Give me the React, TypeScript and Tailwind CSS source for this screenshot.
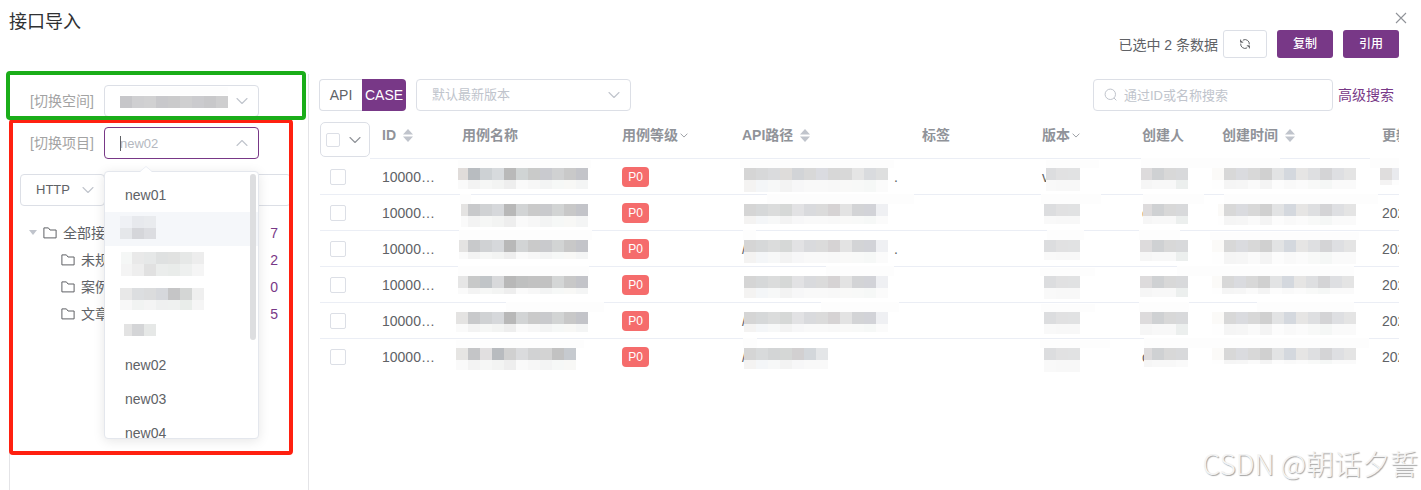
import React from 'react';

type MosaicProps = {
  left: number;
  right: number;
  top: string[];
  bottom: string[];
  bottomHeight?: number;
  y?: number;
  smear?: [number, number];
  smearFull?: boolean;
};

const CELL = 12;

/* Pixelated block that hides a value. Cells sit on a 12px grid that ends at `right`. */
function Mosaic({ left, right, top, bottom, bottomHeight = 9, y = 10, smear, smearFull }: MosaicProps) {
  const cells = (colors: string[], cy: number, h: number) =>
    colors.map((color, i) => {
      const start = Math.max(left, right - (colors.length - i) * CELL);
      const end = right - (colors.length - i - 1) * CELL;
      return <rect key={`${cy}-${i}`} x={start} y={cy} width={Math.max(0, end - start)} height={h} fill={color} />;
    });
  return (
    <svg
      aria-hidden="true"
      className="pointer-events-none absolute -top-px left-0 overflow-visible"
      width={right}
      height={y + CELL + bottomHeight}
      shapeRendering="crispEdges"
    >
      {smear && (
        <rect
          x={smear[0]}
          y={smearFull === false ? 2 : 0}
          width={smear[1] - smear[0]}
          height={smearFull === false ? 8 : 10}
          fill="#fdfdfd"
        />
      )}
      {cells(top, y, CELL)}
      {cells(bottom, y + CELL, bottomHeight)}
    </svg>
  );
}

function Chevron({ up = false, small = false, className = '' }: { up?: boolean; small?: boolean; className?: string }) {
  return (
    <svg
      aria-hidden="true"
      className={`pointer-events-none shrink-0 ${className}`}
      width={small ? 8 : 12}
      height={small ? 5 : 8}
      viewBox="0 0 12 8"
      fill="none"
      stroke="currentColor"
      strokeWidth={small ? 1.4 : 1.1}
      strokeLinecap="round"
      strokeLinejoin="round"
    >
      <path d={up ? 'M1 6.5L6 1.5L11 6.5' : 'M1 1.5L6 6.5L11 1.5'} />
    </svg>
  );
}

function SortCaret() {
  return (
    <svg aria-hidden="true" className="shrink-0" width="10" height="13" viewBox="0 0 10 13" fill="#c0c4cc">
      <path d="M5 0L10 5.5H0Z" />
      <path d="M5 13L0 7.5H10Z" />
    </svg>
  );
}

function Folder() {
  return (
    <svg aria-hidden="true" className="shrink-0" width="14" height="14" viewBox="0 0 14 14" fill="none" stroke="#606266" strokeWidth="1">
      <path d="M0.9 1.9H5.4L7 4H13.1V11.9H0.9Z" strokeLinejoin="round" />
    </svg>
  );
}

const nameTop = ['#e4e3e2', '#c8c9cb', '#d0d2d4', '#d6d8db', '#b8b8b8', '#d2d4d5', '#cacaca', '#c9cacd', '#d2d4d4', '#c8c8c8', '#c3c4c9'];
const nameBottom = ['#fafafa', '#f3f3f3', '#f6f7f6', '#f3f4f3', '#eeeeee', '#fafafa', '#f7f7f7', '#f3f4f4', '#f6f8f7', '#f8f8f6', '#f4f5f5'];
const nameFirst = ['#e0dcda', '#b8bcc0', '#cdd1d4', '#d7dadd', '#b9b9b9', '#d0d4d4', '#c9cac9', '#c9cacf', '#d0d1d2', '#c9c9c9', '#c3c4c9'];
const nameFourth = ['#e6e6e6', '#c8c9c9', '#c1c5c8', '#d8d9db', '#b8b8b8', '#bfc0c0', '#c2c2c2', '#c2c2c2', '#d4d6d6', '#c8c8c8', '#c3c4c9'];
const nameLast = ['#e6e5e3', '#c4c5c7', '#e1dfe0', '#b8bbbf', '#d0d0d0', '#dadbdd', '#d1d2d3', '#d3d3d3', '#c2c2c2', '#c6cacf'];

const pathFirst = ['#d5d5d5', '#d7d8d9', '#dadbdd', '#dedcda', '#d2d4d7', '#d8d8d8', '#dadbe0', '#d7d7d7', '#d8d8d8', '#e5e5e5', '#d9dbde', '#dedfdf'];
const pathTop = ['#d5d5d5', '#d6d8d9', '#dbdcdc', '#d6d8d7', '#e2e2e4', '#d9dadd', '#dbdbdb', '#d6d3d4', '#e3e3e3', '#d3d4d6', '#d2d3d8', '#eff0f3'];
const pathBottom = ['#f4f3f2', '#f4f6f8', '#f7f8f8', '#f3f3f3', '#f7f7f8', '#f9f9f9', '#f9f9f9', '#f8f8f8', '#f9f9f8', '#f8f9f8', '#f6f8f7', '#fbfbfb'];
const pathLast = ['#d5d5d5', '#d8dadb', '#d3d5d6', '#d5d7d6', '#d2d0d1', '#d3d7db', '#e4e6e8'];

const versionTop = ['#dcdddf', '#e1e1e2', '#e1e2e3'];
const versionBottom = ['#f9f9f9', '#f8f8f8', '#f8f8f8'];
const creatorTop = ['#dddbdc', '#cfd1d3', '#d8d8d8', '#d8d9db'];
const creatorBottom = ['#f6f6f6', '#f8f8f8', '#f8f8f8', '#ecefee'];
const createdTop = ['#fbfaf8', '#d8d8d8', '#dadbdf', '#d8d8d8', '#d0d0d0', '#e2e3e4', '#d4d8de', '#e6e5e4', '#dedfe1', '#d4d4d6', '#dedfe2', '#e4e4e4'];
const createdBottom = ['#fefefe', '#f5f5f5', '#f6f6f6', '#fafafa', '#f4f4f4', '#fcfcfc', '#f9f9f9', '#fbfbfb', '#f8f9f8', '#f5f7f6', '#fafafa', '#fafafa'];

type Row = {
  name: MosaicProps;
  path: MosaicProps;
  tail?: string;
  version: MosaicProps;
  versionText?: string;
  creator: MosaicProps;
  creatorText?: string;
  created: MosaicProps;
  pathText?: string;
};

const rows: Row[] = [
  {
    name: { left: 8, right: 138, top: nameFirst, bottom: nameBottom, smear: [8, 141], smearFull: false },
    path: { left: 14, right: 158, top: pathFirst, bottom: pathBottom, bottomHeight: 12, smear: [10, 164], smearFull: false },
    tail: '.',
    version: { left: 16, right: 50, top: versionTop, bottom: versionBottom, bottomHeight: 11, smear: [16, 69], smearFull: false },
    versionText: 'v',
    creator: { left: 11, right: 58, top: creatorTop, bottom: creatorBottom, smear: [11, 80] },
    created: { left: 2, right: 146, top: createdTop, bottom: createdBottom, smear: [0, 70] },
  },
  {
    name: { left: 11, right: 138, top: nameTop, bottom: nameBottom, bottomHeight: 11, smear: [10, 21] },
    path: { left: 14, right: 158, top: pathTop, bottom: pathBottom, bottomHeight: 8, smear: [37, 184] },
    version: { left: 14, right: 50, top: versionTop, bottom: versionBottom, bottomHeight: 8, smear: [11, 71] },
    creator: { left: 13, right: 58, top: creatorTop, bottom: creatorBottom, bottomHeight: 8, smear: [13, 74] },
    creatorText: 'c',
    created: { left: 8, right: 146, top: createdTop, bottom: createdBottom, smear: [14, 168] },
  },
  {
    name: { left: 9, right: 138, top: nameTop, bottom: nameBottom, bottomHeight: 7, smear: [9, 142] },
    path: { left: 14, right: 158, top: pathTop, bottom: pathBottom, bottomHeight: 11, smear: [13, 26] },
    pathText: '/',
    tail: '.',
    version: { left: 14, right: 50, top: versionTop, bottom: versionBottom, bottomHeight: 8, smear: [17, 54] },
    creator: { left: 10, right: 58, top: creatorTop, bottom: creatorBottom, smear: [9, 50] },
    created: { left: 2, right: 146, top: createdTop, bottom: createdBottom, bottomHeight: 12, smear: [0, 149], smearFull: false },
  },
  {
    name: { left: 8, right: 138, top: nameFourth, bottom: nameBottom, bottomHeight: 6, smear: [8, 139] },
    path: { left: 14, right: 158, top: pathTop, bottom: pathBottom, bottomHeight: 10, smear: [96, 164] },
    version: { left: 14, right: 50, top: versionTop, bottom: versionBottom, bottomHeight: 11, smear: [10, 65], smearFull: false },
    creator: { left: 10, right: 58, top: creatorTop, bottom: creatorBottom, smear: [47, 80] },
    created: {
      left: 2, right: 144,
      top: createdTop,
      bottom: createdBottom, bottomHeight: 6, smear: [0, 144],
    },
  },
  {
    name: { left: 6, right: 138, top: nameTop, bottom: nameBottom, bottomHeight: 8, smear: [56, 154] },
    path: { left: 14, right: 158, top: pathTop, bottom: pathBottom, bottomHeight: 8, smear: [91, 169] },
    pathText: '/',
    version: { left: 14, right: 50, top: versionTop, bottom: versionBottom, bottomHeight: 10, smear: [11, 65], smearFull: false },
    creator: { left: 10, right: 58, top: creatorTop, bottom: creatorBottom, bottomHeight: 11, smear: [9, 59] },
    created: { left: 2, right: 146, top: createdTop, bottom: createdBottom, bottomHeight: 11, smear: [47, 144] },
  },
  {
    name: { left: 6, right: 126, top: nameLast, bottom: nameBottom.slice(0, 10), bottomHeight: 10, smear: [6, 134], smearFull: false },
    path: { left: 14, right: 98, top: pathLast, bottom: pathBottom.slice(0, 7), smear: [13, 27] },
    pathText: '/',
    version: { left: 14, right: 50, top: versionTop, bottom: versionBottom, bottomHeight: 12, smear: [10, 80], smearFull: false },
    creator: { left: 14, right: 58, top: creatorTop, bottom: ['#f6f6f6', '#f8f8f8', '#f8f8f8', '#fafafa'], bottomHeight: 7, smear: [14, 80] },
    creatorText: 'c',
    created: { left: 2, right: 146, top: createdTop, bottom: createdBottom, bottomHeight: 4, smear: [0, 159] },
  },
];

const tree = [
  { label: '全部接口', count: 7, root: true },
  { label: '未规划接口', count: 2, root: false },
  { label: '案例接口', count: 0, root: false },
  { label: '文章接口', count: 5, root: false },
];

type Option = { label?: string; active?: boolean; mosaic?: MosaicProps };

const options: Option[] = [
  { label: 'new01' },
  {
    active: true,
    mosaic: { left: 15, right: 51, y: 5, top: ['#eff1f5', '#e7e9ed', '#e9ebee'], bottom: ['#e5e7ea', '#d5d6da', '#dcdde1'], bottomHeight: 11 },
  },
  {
    mosaic: {
      left: 16, right: 99, y: 7,
      top: ['#f5f7f6', '#e9e9e9', '#e6e8e8', '#dfe1e1', '#e1e2e1', '#e6e8e7', '#ededed'],
      bottom: ['#f4f4f4', '#eeeeee', '#e1e1e1', '#ebedec', '#e9ecea', '#eef0ef', '#f5f5f5'],
      bottomHeight: 12,
    },
  },
  {
    mosaic: {
      left: 15, right: 99, y: 9,
      top: ['#e8e8e8', '#dcdee0', '#dbdcdd', '#d6d8dc', '#c5c5c6', '#d4d6d5', '#efefef'],
      bottom: ['#f8f8f8', '#f1f3f2', '#f4f4f4', '#eff0f0', '#eff1f0', '#e9edea', '#f5f5f5'],
      bottomHeight: 10,
    },
  },
  { mosaic: { left: 19, right: 51, y: 11, top: ['#e3e3e3', '#d4d5d7', '#e6e8e7'], bottom: [] } },
  { label: 'new02' },
  { label: 'new03' },
  { label: 'new04' },
];

function HeadCell({ children }: { children?: React.ReactNode }) {
  return (
    <th className="border-b border-[#ebeef5] px-3 pt-1 text-left align-top font-bold">
      <div className="flex h-6 items-center whitespace-nowrap">{children}</div>
    </th>
  );
}

function Sidebar() {
  return (
    <aside className="relative ml-[9px] w-[300px] shrink-0 border-x border-[#e4e4e7] pr-[17px] pt-[11px]">
      <div className="flex items-center pl-5">
        <label htmlFor="space" className="w-[74px] whitespace-nowrap text-[#a3a3a3]">[切换空间]</label>
        <div className="relative">
          <select id="space" className="block h-8 w-[155px] appearance-none rounded border border-[#dcdfe6] bg-white px-4 text-[13px] outline-none" />
          <div className="absolute left-px top-px">
            <Mosaic
              left={15}
              right={123}
              y={11}
              top={['#c6c6c9', '#cfcfd1', '#d1d1d2', '#c8c8cb', '#cacacb', '#cfcfd0', '#cbcbce', '#c8c8ca', '#cececf']}
              bottom={[]}
              smear={[15, 123]}
              smearFull={false}
            />
          </div>
          <Chevron className="absolute right-[11px] top-3 text-[#c0c4cc]" />
        </div>
      </div>

      <div className="mt-[10px] flex items-center pl-5">
        <label htmlFor="project" className="w-[74px] whitespace-nowrap text-[#a3a3a3]">[切换项目]</label>
        <div className="relative">
          <input
            id="project"
            type="text"
            placeholder="new02"
            className="block h-8 w-[155px] rounded border border-[#783887] bg-white px-[15px] text-[13px] outline-none placeholder:text-[#b4b8c0]"
          />
          <span aria-hidden="true" className="absolute left-4 top-[9px] h-[15px] w-px bg-[#606266]" />
          <Chevron up className="absolute right-[11px] top-3 text-[#c0c4cc]" />

          <div className="absolute left-0 top-[44px] z-20 w-[155px]">
            <svg aria-hidden="true" className="absolute -top-[5px] left-9 z-10" width="12" height="7" viewBox="0 0 12 7">
              <path d="M0 6L6 0.5L12 6V7H0Z" fill="#fff" />
              <path d="M0 5.5L6 0.5L12 5.5" fill="none" stroke="#ebeef5" />
            </svg>
            <div className="relative h-[268px] overflow-hidden rounded border border-[#e4e7ed] bg-white shadow-[0_2px_12px_0_rgba(0,0,0,0.1)]">
              <ul role="listbox" aria-label="项目" className="pt-[6px]">
                {options.map((option, i) => (
                  <li
                    key={i}
                    role="option"
                    aria-selected={Boolean(option.active)}
                    className={`relative h-[34px] px-5 leading-[34px] text-[#606266] ${option.active ? 'bg-[#f5f7fa]' : ''}`}
                  >
                    {option.label}
                    {option.mosaic && <Mosaic {...option.mosaic} />}
                  </li>
                ))}
              </ul>
              <span aria-hidden="true" className="absolute right-[2px] top-[2px] h-[166px] w-[6px] rounded-full bg-[#dddee0]" />
            </div>
          </div>
        </div>
      </div>

      <div className="mt-[15px] flex pl-[10px]">
        <div className="relative">
          <select
            aria-label="协议"
            className="block h-8 w-[85px] appearance-none rounded border border-[#dcdfe6] bg-white px-[15px] text-[13px] text-[#606266] outline-none"
          >
            <option>HTTP</option>
          </select>
          <Chevron className="absolute right-[11px] top-3 text-[#c0c4cc]" />
        </div>
        <input aria-label="搜索模块" type="text" className="-ml-px h-8 min-w-0 flex-1 rounded border border-[#dcdfe6] bg-white px-3 text-[13px] outline-none" />
      </div>

      <ul className="mt-[13px]">
        {tree.map((node) => (
          <li key={node.label} className={`flex h-[27px] items-center pr-[13px] ${node.root ? 'pl-[19px]' : 'pl-[51px]'}`}>
            {node.root && (
              <svg aria-hidden="true" className="mr-[6px] shrink-0" width="8" height="5" viewBox="0 0 8 5" fill="#c0c4cc">
                <path d="M0 0H8L4 5Z" />
              </svg>
            )}
            <Folder />
            <span className="ml-[6px] whitespace-nowrap text-[#606266]">{node.label}</span>
            <span className="ml-auto text-[#783887]">{node.count}</span>
          </li>
        ))}
      </ul>

      <div aria-hidden="true" className="pointer-events-none absolute -left-px top-[45px] z-10 h-[336px] w-[284px] rounded border-4 border-[#ff2010]" />
      <div aria-hidden="true" className="pointer-events-none absolute -left-1 -top-[3px] z-10 h-[49px] w-[300px] rounded border-4 border-[#1aad19]" />
    </aside>
  );
}

function CaseTable() {
  return (
    <div className="mt-2 overflow-hidden pl-px">
      <table className="w-[1210px] table-fixed border-separate border-spacing-0 text-[#606266]">
        <colgroup>
          <col className="w-[50px]" />
          <col className="w-[80px]" />
          <col className="w-[160px]" />
          <col className="w-[120px]" />
          <col className="w-[180px]" />
          <col className="w-[120px]" />
          <col className="w-[100px]" />
          <col className="w-[80px]" />
          <col className="w-[160px]" />
          <col className="w-[160px]" />
        </colgroup>
        <thead>
          <tr className="h-10 text-[#909399]">
            <th className="pt-[3px] align-top">
              <div className="flex h-[35px] items-center rounded-[5px] border border-[#dcdfe6] pl-[5px]">
                <input type="checkbox" aria-label="全选" className="size-[14px] appearance-none rounded-[2px] border border-[#dcdfe6] bg-white" />
                <Chevron className="ml-[9px] text-[#909399]" />
              </div>
            </th>
            <HeadCell>ID<span className="ml-[7px]"><SortCaret /></span></HeadCell>
            <HeadCell>用例名称</HeadCell>
            <HeadCell>用例等级<Chevron small className="ml-[2px]" /></HeadCell>
            <HeadCell>API路径<span className="ml-[7px]"><SortCaret /></span></HeadCell>
            <HeadCell>标签</HeadCell>
            <HeadCell>版本<Chevron small className="ml-[2px]" /></HeadCell>
            <HeadCell>创建人</HeadCell>
            <HeadCell>创建时间<span className="ml-[7px]"><SortCaret /></span></HeadCell>
            <HeadCell>更新时间</HeadCell>
          </tr>
        </thead>
        <tbody className="[&>tr:not(:last-child)>td]:border-b [&>tr>td]:border-[#ebeef5]">
          {rows.map((row, i) => (
            <tr key={i} className="h-9">
              <td className="pl-[10px]">
                <input type="checkbox" aria-label={`选择第${i + 1}行`} className="block size-4 appearance-none rounded-[2px] border border-[#dcdfe6] bg-white" />
              </td>
              <td className="px-3">
                <div className="overflow-hidden text-ellipsis whitespace-nowrap">100000001</div>
              </td>
              <td className="relative"><Mosaic {...row.name} /></td>
              <td className="px-3">
                <span className="block h-5 w-[27px] rounded bg-[#f56c6c] text-center text-xs font-medium leading-5 text-white">P0</span>
              </td>
              <td className="relative px-3">
                <div className="flex justify-between">
                  <span>{row.pathText}</span>
                  <span>{row.tail}</span>
                </div>
                <Mosaic {...row.path} />
              </td>
              <td />
              <td className="relative px-3">
                {row.versionText}
                <Mosaic {...row.version} />
              </td>
              <td className="relative px-3">
                {row.creatorText}
                <Mosaic {...row.creator} />
              </td>
              <td className="relative"><Mosaic {...row.created} /></td>
              <td className="relative whitespace-nowrap px-3">
                2021-11-02
                {i === 0 && (
                  <Mosaic left={10} right={34} top={['#dfdddd', '#e9eaee']} bottom={['#f4f3f3', '#fdfdfd']} bottomHeight={5} smear={[0, 34]} />
                )}
              </td>
            </tr>
          ))}
        </tbody>
      </table>
    </div>
  );
}

export default function App() {
  return (
    <div className="relative flex min-h-screen flex-col overflow-hidden bg-white font-['Liberation_Sans','Noto_Sans_CJK_SC',sans-serif] text-sm text-[#606266]">
      <header className="flex justify-between pl-[9px] pr-[14px]">
        <h1 className="pt-[10px] text-lg leading-6 text-[#303133]">接口导入</h1>
        <div className="flex flex-col items-end pt-3">
          <button type="button" aria-label="关闭" className="size-3 text-[#909399]">
            <svg width="12" height="12" viewBox="0 0 12 12" fill="none" stroke="currentColor" strokeWidth="1.1">
              <path d="M1 1L11 11M11 1L1 11" />
            </svg>
          </button>
          <div className="mr-2 mt-[6px] flex items-center">
            <span className="mr-[5px] pt-[2px]">已选中 2 条数据</span>
            <button type="button" aria-label="刷新" className="mr-[10px] flex h-7 w-11 items-center justify-center rounded-[3px] border border-[#dcdfe6] bg-white">
              <svg width="12" height="12" viewBox="0 0 12 12" fill="none" stroke="#606266" strokeWidth="1">
                <path d="M4 2.1A4.3 4.3 0 0 1 10.3 6.4" />
                <path d="M8 9.9A4.3 4.3 0 0 1 1.7 5.6" />
                <path d="M1.6 1.6V4.2H4.2" />
                <path d="M10.4 10.4V7.8H7.8" />
                <path d="M1.8 4.1L3 2.8M10.2 7.9L9 9.2" />
              </svg>
            </button>
            <button type="button" className="mr-[10px] h-7 w-14 rounded-[3px] bg-[#783887] text-xs font-medium text-white">复制</button>
            <button type="button" className="h-7 w-14 rounded-[3px] bg-[#783887] text-xs font-medium text-white">引用</button>
          </div>
        </div>
      </header>

      <div className="mt-4 flex flex-1">
        <Sidebar />
        <main className="min-w-0 flex-1 pl-[10px] pr-[22px] pt-[5px]">
          <div className="flex items-center pr-[5px]">
            <div className="flex h-8 w-[87px]">
              <button type="button" className="flex-1 rounded-l border border-r-0 border-[#dcdfe6] bg-white text-[#606266]">API</button>
              <button type="button" className="w-11 rounded-r bg-[#783887] text-white">CASE</button>
            </div>
            <div className="relative ml-[10px]">
              <select
                aria-label="版本"
                className="block h-8 w-[215px] appearance-none rounded border border-[#dcdfe6] bg-white px-[15px] text-[13px] text-[#c0c4cc] outline-none"
              >
                <option>默认最新版本</option>
              </select>
              <Chevron className="absolute right-[11px] top-3 text-[#c0c4cc]" />
            </div>
            <div className="relative ml-auto">
              <input
                type="search"
                aria-label="搜索用例"
                placeholder="通过ID或名称搜索"
                className="block h-8 w-60 rounded border border-[#dcdfe6] bg-white pl-[30px] pr-3 text-[13px] outline-none placeholder:text-[#c0c4cc]"
              />
              <svg
                aria-hidden="true"
                className="absolute left-[11px] top-[9px]"
                width="14"
                height="14"
                viewBox="0 0 14 14"
                fill="none"
                stroke="#c0c4cc"
                strokeWidth="1"
              >
                <circle cx="6.3" cy="6.3" r="5.2" />
                <path d="M10 10L12.4 12.4" />
              </svg>
            </div>
            <a href="#advanced" className="ml-[5px] whitespace-nowrap text-[#783887]">高级搜索</a>
          </div>
          <CaseTable />
        </main>
      </div>

      <div className="pointer-events-none absolute bottom-[7px] right-[3px] whitespace-nowrap font-['Noto_Sans_CJK_SC',sans-serif] text-[28px] font-light leading-10 text-[#f4f4f4] [text-shadow:1px_1px_1px_#a3a3a3]">
        CSDN @朝话夕誓
      </div>
    </div>
  );
}
